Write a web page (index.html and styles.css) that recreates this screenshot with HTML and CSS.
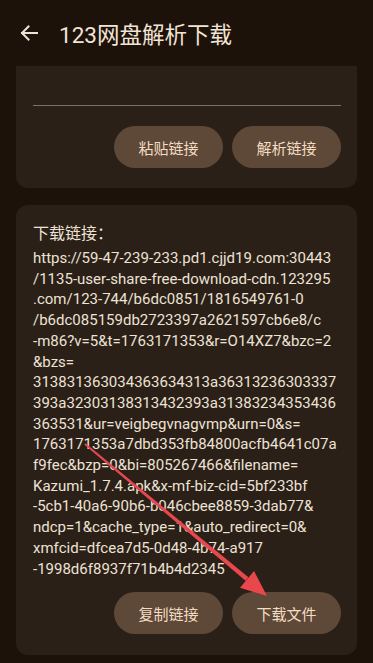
FILE: index.html
```html
<!DOCTYPE html>
<html lang="zh">
<head>
<meta charset="utf-8">
<title>123网盘解析下载</title>
<link rel="stylesheet" href="styles.css">
</head>
<body>
<div class="app">
  <header class="toolbar">
    <svg class="back" width="18" height="16" viewBox="0 0 18 16" aria-hidden="true">
      <path d="M17 8H2M8.5 1.5L2 8l6.5 6.5" fill="none" stroke="#efe2d4" stroke-width="2" stroke-linecap="square"/>
    </svg>
    <h1 class="title">123网盘解析下载</h1>
  </header>
  <main class="content">
    <section class="card card-input">
      <div class="input-area"></div>
      <div class="divider"></div>
      <div class="actions">
        <button class="pill">粘贴链接</button>
        <button class="pill">解析链接</button>
      </div>
    </section>
    <section class="card card-result">
      <h2 class="label">下载链接：</h2>
      <p class="url"><span>https://59-47-239-233.pd1.cjjd19.com:30443</span><span>/1135-user-share-free-download-cdn.123295</span><span>.com/123-744/b6dc0851/1816549761-0</span><span>/b6dc085159db2723397a2621597cb6e8/c</span><span>-m86?v=5&amp;t=1763171353&amp;r=O14XZ7&amp;bzc=2</span><span>&amp;bzs=</span><span>313831363034363634313a36313236303337</span><span>393a32303138313432393a31383234353436</span><span>363531&amp;ur=veigbegvnagvmp&amp;urn=0&amp;s=</span><span>1763171353a7dbd353fb84800acfb4641c07a</span><span>f9fec&amp;bzp=0&amp;bi=805267466&amp;filename=</span><span>Kazumi_1.7.4.apk&amp;x-mf-biz-cid=5bf233bf</span><span>-5cb1-40a6-90b6-b046cbee8859-3dab77&amp;</span><span>ndcp=1&amp;cache_type=1&amp;auto_redirect=0&amp;</span><span>xmfcid=dfcea7d5-0d48-4b74-a917</span><span>-1998d6f8937f71b4b4d2345</span></p>
      <div class="actions">
        <button class="pill">复制链接</button>
        <button class="pill">下载文件</button>
      </div>
    </section>
  </main>
  <svg class="annotation" width="373" height="663" viewBox="0 0 373 663" aria-hidden="true">
    <polygon points="84.4,444.8 85.6,443.2 248.4,577.3 245.6,580.7" fill="#e8474c"/>
    <polygon points="267,596 240,587.8 254,570.9" fill="#e8474c"/>
  </svg>
</div>
</body>
</html>
```

FILE: styles.css
```css
* { box-sizing: border-box; }
html, body { margin: 0; padding: 0; }
body {
  background: #1c1209;
  font-family: Roboto, "Noto Sans CJK SC", sans-serif;
  color: #eee2d5;
  overflow: hidden;
}
.app {
  position: relative;
  width: 373px;
  height: 663px;
  background: #1c1209;
}
.toolbar {
  height: 66px;
  display: flex;
  align-items: center;
  padding-left: 20px;
}
.back { flex: none; }
.title {
  margin: 0 0 0 21px;
  font-size: 22.5px;
  font-weight: 400;
  color: #f2e4d6;
  letter-spacing: 0;
}
.content {
  padding: 0 16px;
  display: flex;
  flex-direction: column;
  gap: 17px;
}
.card {
  background: #2a2018;
  border-radius: 12px;
  padding: 0 16px 20px 17px;
}
.card-input {
  border-radius: 0 0 12px 12px;
}
.input-area { height: 39px; }
.divider {
  height: 1px;
  background: #7e7064;
}
.actions {
  display: flex;
  justify-content: flex-end;
  gap: 9px;
  margin-top: 20px;
}
.pill {
  width: 109px;
  height: 42px;
  border: none;
  border-radius: 21px;
  background: #5e4938;
  color: #f4dcc3;
  font-family: Roboto, "Noto Sans CJK SC", sans-serif;
  font-size: 15px;
  padding: 0;
}
.card-result { padding-top: 18px; padding-bottom: 21px; }
.label {
  margin: 0;
  font-size: 16px;
  font-weight: 400;
  line-height: 22px;
  color: #eee2d5;
}
.url {
  margin: 3px 0 0 0;
  font-size: 15px;
  line-height: 20.7px;
  color: #eee2d5;
}
.url span {
  display: block;
  white-space: nowrap;
}
.card-result .actions { margin-top: 13px; }
.annotation {
  position: absolute;
  left: 0;
  top: 0;
  pointer-events: none;
}
```
